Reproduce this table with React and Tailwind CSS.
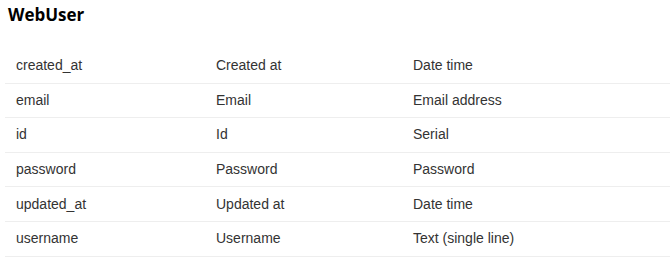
export default function App() {
  const rows = [
    ['created_at', 'Created at', 'Date time'],
    ['email', 'Email', 'Email address'],
    ['id', 'Id', 'Serial'],
    ['password', 'Password', 'Password'],
    ['updated_at', 'Updated at', 'Date time'],
    ['username', 'Username', 'Text (single line)'],
  ];

  return (
    <div className="w-[670px] h-[273px] bg-white overflow-hidden pl-[5px]">
      <h2 className="pl-[3px] pt-[3px] text-[17px] leading-[24px] font-bold text-black font-['Open_Sans',sans-serif]">
        WebUser
      </h2>
      <div className="mt-[22px] font-['Liberation_Sans',Arial,sans-serif] text-[14px] text-[#333]">
        {rows.map((r) => (
          <div
            key={r[0]}
            className="grid grid-cols-[200px_197px_1fr] h-[34.6px] items-center border-b border-[#eeeeee]"
          >
            <div className="pl-[11px]">{r[0]}</div>
            <div className="pl-[11px]">{r[1]}</div>
            <div className="pl-[11px]">{r[2]}</div>
          </div>
        ))}
      </div>
    </div>
  );
}
